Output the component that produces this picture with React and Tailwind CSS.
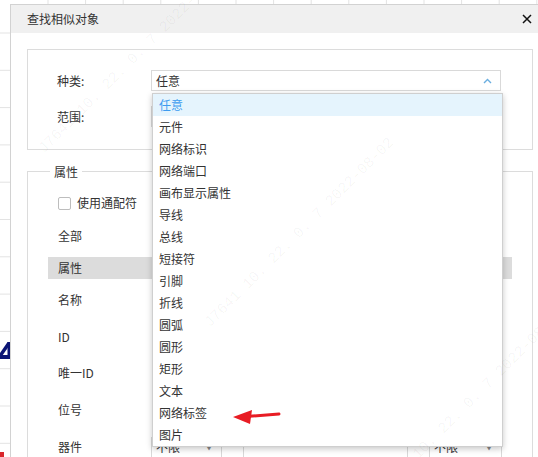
const ITEMS = ['任意', '元件', '网络标识', '网络端口', '画布显示属性', '导线', '总线', '短接符', '引脚', '折线', '圆弧', '圆形', '矩形', '文本', '网络标签', '图片'];

const ROWS = [
  { label: '全部', mt: 'mt-[11px]' },
  { label: '属性', mt: 'mt-[10px]', active: true },
  { label: '名称', mt: 'mt-[10px]' },
  { label: 'ID', mt: 'mt-[15px]' },
  { label: '唯一ID', mt: 'mt-[14px]' },
  { label: '位号', mt: 'mt-[15px]' },
  { label: '器件', mt: 'mt-[15px]', selects: true },
];

function Canvas() {
  const hLines = Array.from({ length: 12 }, (_, i) => 33 + i * 37.3);
  const vLines = Array.from({ length: 14 }, (_, i) => 48 + i * 37.6);
  return (
    <svg className="absolute inset-0" width="538" height="457">
      {hLines.map((y) => (
        <line key={y} x1="0" x2="10" y1={y} y2={y} stroke="#e3e3e3" />
      ))}
      {vLines.map((x) => (
        <line key={x} x1={x} x2={x} y1="0" y2="4" stroke="#e3e3e3" />
      ))}
      {/* bit of a schematic glyph behind the dialog */}
      <path d="M0 356L9 343" stroke="#0b1575" strokeWidth="3.5" />
      <rect x="0" y="355" width="10" height="4" fill="#0b1575" />
      <rect x="7.5" y="342" width="2.5" height="17" fill="#0b1575" />
      <rect x="0" y="452" width="4" height="5" fill="#d9262c" />
    </svg>
  );
}

function Select({ text, className = '' }) {
  return (
    <div className={`h-[21px] border border-[#d9d9d9] bg-white flex items-center justify-between pl-[4px] pr-[8px] ${className}`}>
      <span className="text-[12px] text-[#333] leading-none">{text}</span>
      <span className="text-[8px] text-[#888] leading-none">▼</span>
    </div>
  );
}

function Watermark({ left, top }) {
  return (
    <span
      className="absolute whitespace-nowrap origin-bottom-left -rotate-45 text-[15px] leading-[18px] text-[rgba(0,0,0,0.045)] font-['Liberation_Mono',monospace]"
      style={{ left, top }}
    >
      J7641  10. 22. 0. 7  2022-08-02
    </span>
  );
}

export default function App() {
  return (
    <div className="relative w-[538px] h-[457px] overflow-hidden bg-white font-['Noto_Sans_CJK_SC','Noto_Sans',sans-serif] text-[#333]">
      <Canvas />

      {/* dialog window */}
      <div className="absolute left-[10px] top-[4px] w-[536px] h-[470px] bg-white border border-[#d2d2d2]">
        <div className="h-[28px] bg-[#f0f0f0] flex items-center pl-[16px] pr-[13px]">
          <span className="text-[12px] leading-none">查找相似对象</span>
          <svg className="ml-auto" width="10" height="10" viewBox="0 0 10 10">
            <path d="M1 1L9 9M9 1L1 9" stroke="#111" strokeWidth="1.5" />
          </svg>
        </div>

        <div className="pl-[16px] pt-[16px]">
          {/* type / scope */}
          <div className="w-[506px] h-[101px] border border-[#dcdcdc] pt-[20px] pl-[29px]">
            <div className="flex items-center h-[21px]">
              <span className="w-[94px] text-[12px] leading-none">种类:</span>
              <div className="w-[350px] h-[21px] border border-[#d9d9d9] flex items-center justify-between pl-[4px] pr-[8px]">
                <span className="text-[12px] leading-none">任意</span>
                <svg width="9" height="6" viewBox="0 0 9 6">
                  <path d="M1 5L4.5 1.5L8 5" fill="none" stroke="#6aaee0" strokeWidth="1.4" />
                </svg>
              </div>
            </div>
            <div className="flex items-center h-[21px] mt-[15px]">
              <span className="w-[94px] text-[12px] leading-none">范围:</span>
              <Select text="全部" className="w-[350px]" />
            </div>
          </div>

          {/* attributes */}
          <div className="relative w-[506px] h-[320px] mt-[21px] border border-[#dcdcdc] pt-[20px]">
            <span className="absolute -top-[8px] left-[22px] px-[4px] bg-white text-[12px] leading-[16px]">属性</span>
            <div className="mx-[20px]">
              <div className="h-[22px] flex items-center pl-[10px] gap-[6px]">
                <span className="w-[13px] h-[13px] border border-[#bdbdbd] rounded-[2px] bg-white" />
                <span className="text-[12px] leading-none">使用通配符</span>
              </div>
              {ROWS.map((r) => (
                <div
                  key={r.label}
                  className={`${r.mt} h-[22px] flex items-center pl-[10px] ${r.active ? 'bg-[#dcdcdc]' : ''}`}
                >
                  <span className="w-[93px] text-[12px] leading-none">{r.label}</span>
                  {r.selects && (
                    <div className="flex items-center">
                      <Select text="不限" className="w-[71px]" />
                      <div className="ml-[21px] w-[165px] h-[21px] border-x border-[#d9d9d9]" />
                      <Select text="不限" className="ml-[21px] w-[73px]" />
                    </div>
                  )}
                </div>
              ))}
            </div>
          </div>
        </div>
      </div>

      {/* open dropdown */}
      <div className="absolute left-[152px] top-[93px] w-[351px] bg-white border border-[#cfcfcf] shadow-[0_2px_6px_rgba(0,0,0,0.22)]">
        {ITEMS.map((it, i) => (
          <div
            key={it}
            className={`h-[22px] flex items-center pl-[6px] text-[12px] leading-none ${i === 0 ? 'bg-[#e5f4fd] text-[#3d9cf0]' : 'text-[#333]'}`}
          >
            {it}
          </div>
        ))}
      </div>

      {/* annotation arrow */}
      <svg className="absolute left-0 top-0 pointer-events-none" width="538" height="457">
        <path d="M246 416.5L279 414" stroke="#e81c24" strokeWidth="3" strokeLinecap="round" />
        <path d="M233 417L252 410L250 424Z" fill="#e81c24" />
      </svg>

      {/* watermark */}
      <div className="absolute inset-0 pointer-events-none">
        <Watermark left={48} top={140} />
        <Watermark left={214} top={314} />
        <Watermark left={384} top={484} />
      </div>
    </div>
  );
}
